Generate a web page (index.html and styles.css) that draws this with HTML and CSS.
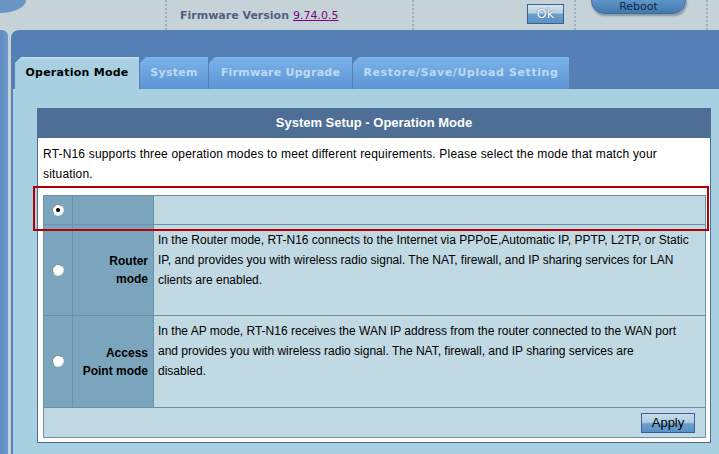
FILE: index.html
```html
<!DOCTYPE html>
<html lang="en">
<head>
    <meta charset="UTF-8">
    <title>Operation Mode</title>
    <link rel="stylesheet" href="styles.css">
</head>
<body>
    <!-- Top bar -->
    <div class="topbar">
        <div class="cell cell-logo"><div class="corner"></div></div>
        <div class="cell cell-fw">
            <span class="fw-label">Firmware Version</span>
            <a href="#" class="fw-link">9.74.0.5</a>
        </div>
        <div class="cell cell-lang"><button class="ok-btn">Ok</button></div>
        <div class="cell cell-reboot"><button class="reboot-btn">Reboot</button></div>
        <div class="cell cell-end"></div>
    </div>

    <!-- Main area -->
    <div class="main">
        <div class="leftbar"></div>
        <div class="panel">
            <ul class="tabs">
                <li class="tab tab-op active">Operation Mode</li>
                <li class="tab tab-sys">System</li>
                <li class="tab tab-fw">Firmware Upgrade</li>
                <li class="tab tab-rs">Restore/Save/Upload Setting</li>
            </ul>
            <div class="tab-body">
                <div class="setup">
                    <div class="setup-head">System Setup - Operation Mode</div>
                    <div class="setup-body">
                        <p class="intro">RT-N16 supports three operation modes to meet different requirements. Please select the mode that match your situation.</p>
                        <div class="mode-wrap">
                            <div class="highlight"></div>
                            <table class="modes">
                                <tr class="row-first">
                                    <td class="col-radio"><span class="radio checked"></span></td>
                                    <td class="col-label"></td>
                                    <td class="col-desc"></td>
                                </tr>
                                <tr class="row-router">
                                    <td class="col-radio"><span class="radio"></span></td>
                                    <td class="col-label">Router<br>mode</td>
                                    <td class="col-desc">In the Router mode, RT-N16 connects to the Internet via PPPoE,Automatic IP, PPTP, L2TP, or Static IP, and provides you with wireless radio signal. The NAT, firewall, and IP sharing services for LAN clients are enabled.</td>
                                </tr>
                                <tr class="row-ap">
                                    <td class="col-radio"><span class="radio"></span></td>
                                    <td class="col-label">Access<br>Point mode</td>
                                    <td class="col-desc">In the AP mode, RT-N16 receives the WAN IP address from the router connected to the WAN port and provides you with wireless radio signal. The NAT, firewall, and IP sharing services are<br>disabled.</td>
                                </tr>
                                <tr class="row-apply">
                                    <td colspan="3"><button class="apply-btn">Apply</button></td>
                                </tr>
                            </table>
                        </div>
                    </div>
                </div>
            </div>
        </div>
    </div>
</body>
</html>
```

FILE: styles.css
```css
* {
    margin: 0;
    padding: 0;
    box-sizing: border-box;
}

body {
    font-family: "Liberation Sans", Arial, sans-serif;
    font-size: 12px;
    background-color: #c5d3d8;
    overflow: hidden;
}

/* Top bar */
.topbar {
    display: flex;
    height: 30px;
}

.cell {
    height: 30px;
    display: flex;
    align-items: flex-start;
}

.cell-logo {
    width: 167px;
    border-right: 2px dotted #9aabbd;
}

.corner {
    width: 26px;
    height: 13px;
    background-color: #6b95c4;
    border-bottom-right-radius: 26px 13px;
}

.cell-fw {
    width: 247px;
    padding: 9px 0 0 13px;
    border-right: 2px dotted #9aabbd;
    font-family: "DejaVu Sans", Verdana, sans-serif;
    font-size: 11px;
}

.fw-label {
    font-weight: bold;
    color: #4f6184;
    margin-right: 4px;
}

.fw-link {
    color: #800080;
}

.cell-lang {
    width: 162px;
    justify-content: flex-end;
    padding: 4px 10px 0 0;
    border-right: 2px dotted #9aabbd;
}

.ok-btn {
    width: 37px;
    height: 20px;
    border: 1px solid #3d5e94;
    background: linear-gradient(#d0e2ee 0%, #b8d0e2 45%, #6a9fcb 50%, #5a92c4 100%);
    color: #ffffff;
    font-family: "DejaVu Sans", Verdana, sans-serif;
    font-size: 13px;
    text-shadow: 0 0 1px #4a6a90, 0 0 1px #4a6a90;
    line-height: 16px;
}

.cell-reboot {
    width: 132px;
    padding-left: 15px;
    border-right: 2px dotted #9aabbd;
}

.reboot-btn {
    width: 95px;
    height: 26px;
    margin-top: -12px;
    border: 1px solid #3f6d9e;
    border-radius: 13px;
    background: linear-gradient(#8ab4dc 0%, #5d92c6 50%, #4479b0 100%);
    color: #10284a;
    font-family: "DejaVu Sans", Verdana, sans-serif;
    font-size: 11px;
    padding-top: 10px;
    box-shadow: 1px 2px 2px rgba(60, 80, 100, 0.45);
}

.cell-end {
    flex: 1;
}

/* Main area */
.main {
    display: flex;
    height: 424px;
}

.leftbar {
    width: 8px;
    background: linear-gradient(90deg, #5d8cc4, #6f9acb);
    border-top-right-radius: 6px;
}

.panel {
    flex: 1;
    margin-left: 3px;
    background-color: #5580b6;
    border-top-left-radius: 8px;
    padding: 27px 0 0 2px;
    display: flex;
    flex-direction: column;
}

/* Tabs */
.tabs {
    list-style: none;
    display: flex;
    height: 32px;
    padding-left: 2px;
    gap: 1px;
}

.tab {
    height: 32px;
    line-height: 31px;
    text-align: center;
    font-family: "DejaVu Sans", Verdana, sans-serif;
    font-size: 11px;
    font-weight: bold;
    letter-spacing: 0.25px;
    color: #bcdaf4;
    background: linear-gradient(#7cb3ea, #5b94d3);
    clip-path: polygon(6px 0, 100% 0, 100% 100%, 0 100%, 0 6px);
}

.tab-op {
    width: 124px;
}

.tab-sys {
    width: 68px;
}

.tab-fw {
    width: 143px;
}

.tab-rs {
    width: 216px;
    letter-spacing: 0.6px;
}

.tab.active {
    color: #000000;
    background: linear-gradient(#c6e2ee, #a9d0e0 3px);
}

.tab-body {
    flex: 1;
    background-color: #a9d0e0;
    padding: 19px 8px 0 24px;
}

/* Setup box */
.setup-head {
    height: 30px;
    line-height: 30px;
    background-color: #4e6e96;
    color: #ffffff;
    font-size: 13px;
    font-weight: bold;
    text-align: center;
}

.setup-body {
    background-color: #ffffff;
    border: 1px solid #4e6e96;
    border-top: none;
    padding: 6px 4px 4px 5px;
}

.intro {
    line-height: 20px;
    margin-bottom: 11px;
    width: 640px;
    letter-spacing: 0.18px;
    color: #000000;
}

.mode-wrap {
    position: relative;
}

.highlight {
    position: absolute;
    top: -9px;
    left: -10px;
    right: -3px;
    height: 45px;
    border: 2px solid #b40000;
    pointer-events: none;
}

/* Mode table */
.modes {
    width: 100%;
    border-collapse: collapse;
    border: 1px solid #a0a0a0;
}

.modes td {
    border: 1px solid #6b91aa;
    vertical-align: middle;
}

.col-radio {
    width: 29px;
    background-color: #7ba5bd;
    text-align: center;
}

.col-label {
    width: 81px;
    background-color: #7ba5bd;
    text-align: right;
    padding-right: 5px;
    font-weight: bold;
    line-height: 18px;
    color: #000000;
}

.col-desc {
    background-color: #c1d9e3;
    padding: 5px 12px 0 4px;
    line-height: 20px;
    color: #000000;
}

.modes .col-desc {
    vertical-align: top;
}

.row-first td {
    height: 29px;
}

.row-router td {
    height: 91px;
}

.row-ap td {
    height: 92px;
}

.row-apply td {
    height: 30px;
    background-color: #c1d9e3;
    text-align: right;
    padding-right: 10px;
}

.radio {
    display: inline-block;
    width: 12px;
    height: 12px;
    margin-top: 2px;
    border-radius: 50%;
    background-color: #ffffff;
    border: 1px solid #8a8a8a;
    border-right-color: #e0e0e0;
    border-bottom-color: #e0e0e0;
    position: relative;
}

.radio.checked::after {
    content: "";
    position: absolute;
    top: 3px;
    left: 3px;
    width: 4px;
    height: 4px;
    border-radius: 50%;
    background-color: #000000;
}

.apply-btn {
    width: 54px;
    height: 20px;
    border: 1px solid #3d5e94;
    background: linear-gradient(#c8dcea 0%, #b0cce0 45%, #6a9fcb 55%, #5a92c4 100%);
    font-family: "Liberation Sans", Arial, sans-serif;
    font-size: 13px;
    color: #000000;
    line-height: 16px;
}
```
